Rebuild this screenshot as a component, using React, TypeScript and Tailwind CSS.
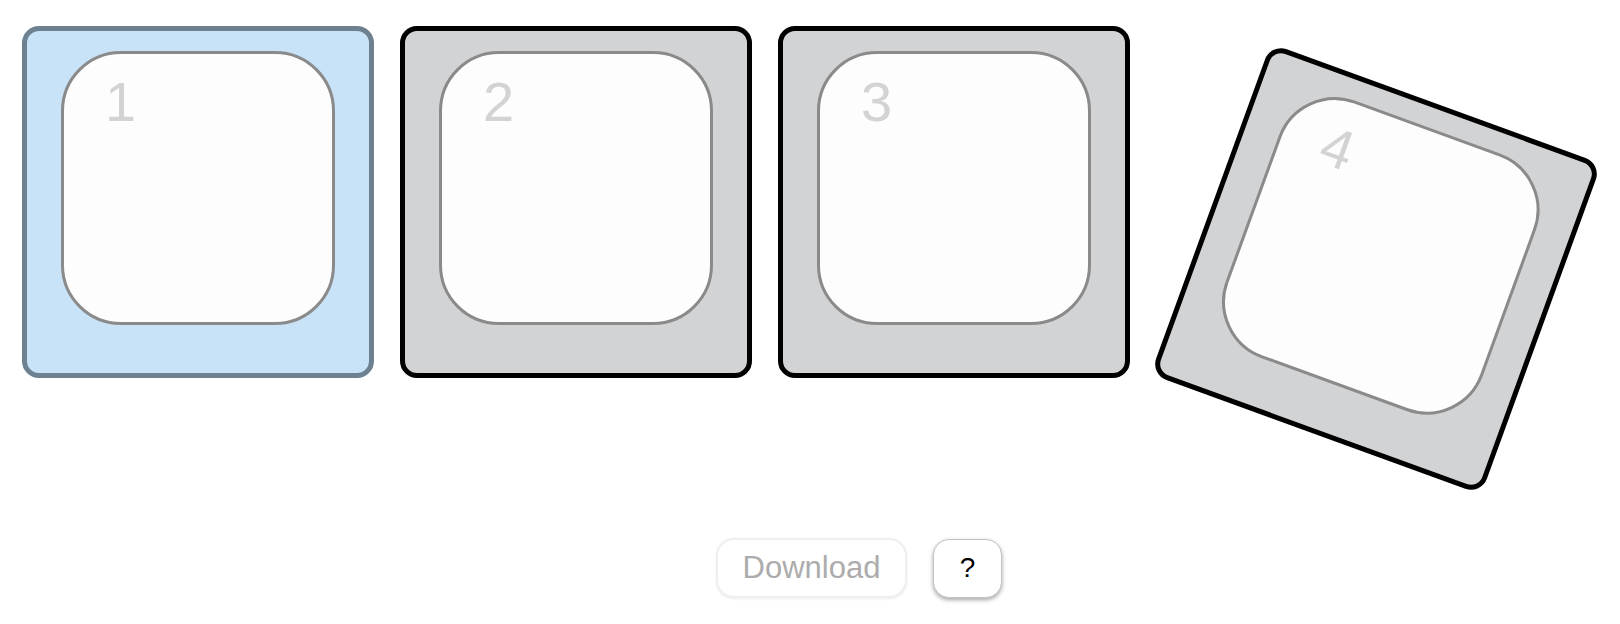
import clsx from "clsx";

type TileProps = {
    n: number;
    selected?: boolean;
    dragged?: boolean;
};

function Tile({ n, selected, dragged }: TileProps) {
    return (
        <div
            className={clsx(
                "w-[352px] h-[352px] shrink-0 rounded-[17px] border-[5px] pt-[20px] flex justify-center items-start",
                selected ? "bg-[#c8e3f8] border-[#6e8190]" : "bg-[#d2d3d5] border-black",
                dragged && "translate-x-[44px] translate-y-[67px] rotate-[20deg]"
            )}
        >
            <div className="w-[274px] h-[274px] rounded-[60px] border-[3px] border-[#8a8a8a] bg-[#fdfdfd] pl-[41px] pt-[20px]">
                <span className="block text-[56px] leading-none text-[#d3d3d3] font-['Liberation_Sans',Arial,sans-serif]">
                    {n}
                </span>
            </div>
        </div>
    );
}

export default function App() {
    return (
        <div className="w-[1620px] h-[624px] bg-white overflow-hidden font-['Liberation_Sans',Arial,sans-serif]">
            <div className="flex gap-[26px] pl-[22px] pt-[26px]">
                <Tile n={1} selected />
                <Tile n={2} />
                <Tile n={3} />
                <Tile n={4} dragged />
            </div>

            <div className="flex items-center gap-[26px] pl-[716px] mt-[160px]">
                <button className="w-[191px] h-[60px] rounded-[18px] border-2 border-[#efefef] bg-white text-[31px] text-[#acacac] shadow-[0_1px_3px_rgba(0,0,0,0.08)]">
                    Download
                </button>
                <button className="w-[69px] h-[59px] rounded-[16px] border border-[#c4c4c4] bg-white text-[28px] text-black shadow-[0_2px_4px_rgba(0,0,0,0.35)]">
                    ?
                </button>
            </div>
        </div>
    );
}
